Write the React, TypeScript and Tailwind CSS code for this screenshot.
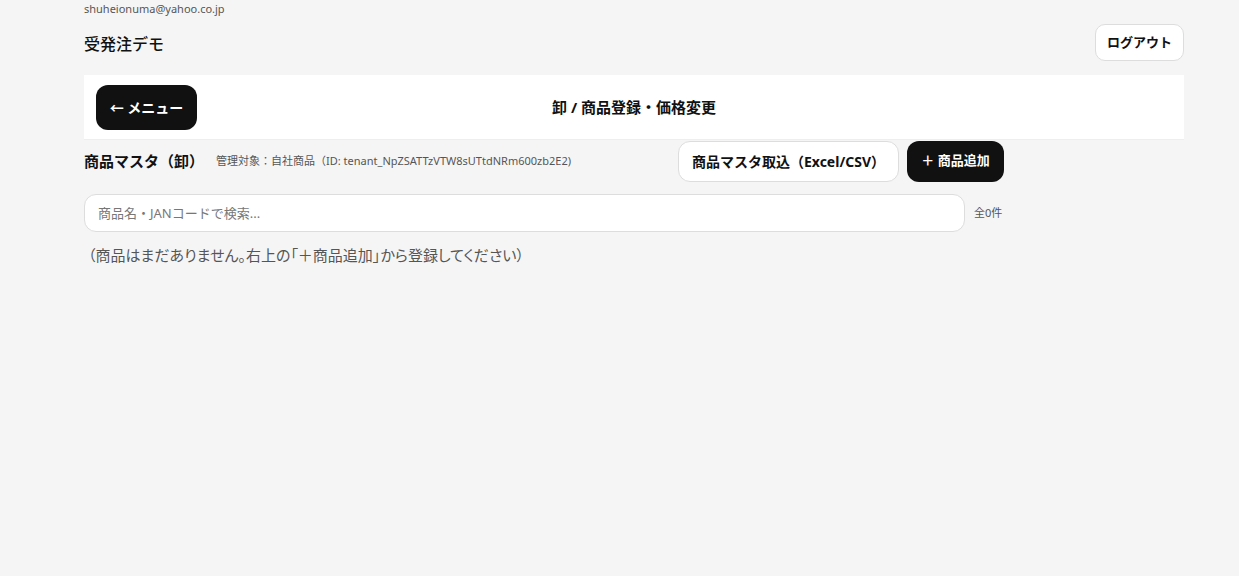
import { useState } from 'react'

const FONT = "font-['Noto_Sans','Noto_Sans_CJK_JP',sans-serif]"

export default function App() {
  const [query, setQuery] = useState('')
  const products: { id: string; name: string }[] = []

  return (
    <div className={`min-h-screen bg-[#f5f5f5] text-[#111] ${FONT}`}>
      <div className="ml-[84px] w-[1100px]">
        <div className="pt-0.5 text-[11px] leading-[14px] text-[#555]">shuheionuma@yahoo.co.jp</div>
        <div className="flex h-[47px] items-center justify-between">
          <h1 className="mt-[8px] text-[16px] font-medium">受発注デモ</h1>
          <button className="mt-[6px] h-[37px] w-[89px] rounded-[10px] border border-[#ddd] bg-white text-[13px] font-bold">
            ログアウト
          </button>
        </div>

        <div className="mt-[12px] flex h-[65px] items-center border-b border-[#eee] bg-white px-[12px]">
          <button className="h-[45px] w-[101px] rounded-[12px] bg-[#111] text-[14px] font-bold text-white">
            ← メニュー
          </button>
          <div className="flex-1 pr-[101px] text-center text-[15px] font-bold">卸 / 商品登録・価格変更</div>
        </div>

        <div className="w-[920px]">
          <div className="flex h-[42px] items-center">
            <h2 className="text-[15px] font-bold">商品マスタ（卸）</h2>
            <span className="ml-[12px] mt-[1px] text-[11px] text-[#555]">
              管理対象：自社商品（ID: tenant_NpZSATTzVTW8sUTtdNRm600zb2E2)
            </span>
            <div className="ml-auto flex gap-[8px]">
              <button className="h-[41px] w-[221px] rounded-[12px] border border-[#ddd] bg-white text-[14px] font-bold">
                商品マスタ取込（Excel/CSV）
              </button>
              <button className="h-[41px] w-[97px] rounded-[12px] bg-[#111] text-[13px] font-bold text-white">
                ＋ 商品追加
              </button>
            </div>
          </div>

          <div className="mt-[12px] flex items-center gap-[9px]">
            <input
              value={query}
              onChange={e => setQuery(e.target.value)}
              placeholder="商品名・JANコードで検索..."
              className="h-[38px] flex-1 rounded-[12px] border border-[#ddd] bg-white px-[13px] text-[13px] outline-none placeholder:text-[#777]"
            />
            <span className="w-[30px] text-[11px] text-[#555]">全{products.length}件</span>
          </div>

          {products.length === 0 && (
            <p className="mt-[12px] pl-[4px] text-[15px] text-[#555] [font-feature-settings:'palt']">
              （商品はまだありません。右上の「＋商品追加」から登録してください）
            </p>
          )}
        </div>
      </div>
    </div>
  )
}
